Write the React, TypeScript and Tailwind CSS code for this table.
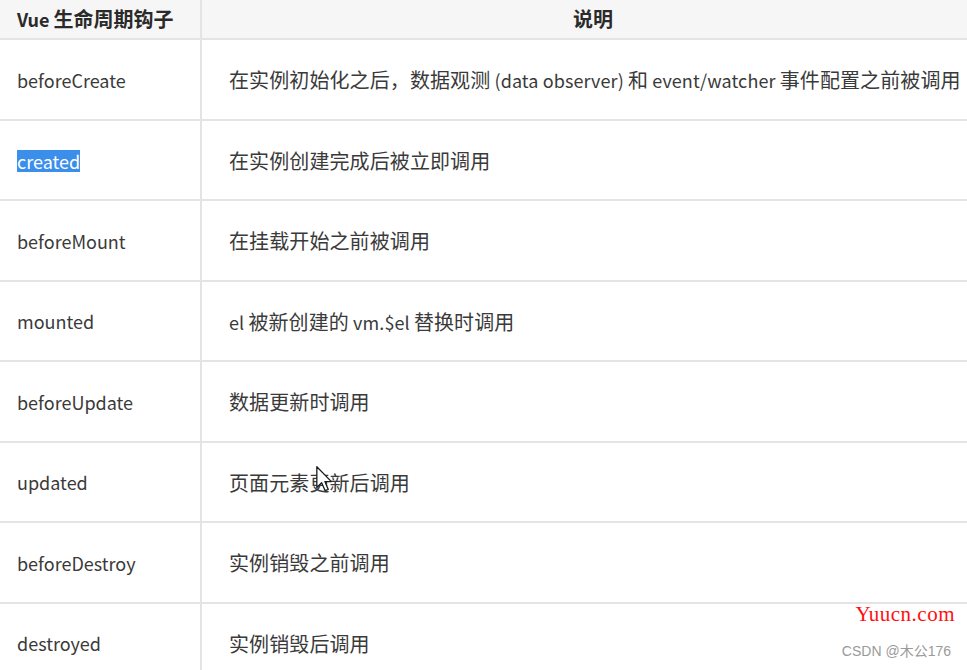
import React from 'react';

interface Hook {
  name: string;
  desc: string;
}

const HOOKS: Hook[] = [
  { name: 'beforeCreate', desc: '在实例初始化之后，数据观测 (data observer) 和 event/watcher 事件配置之前被调用' },
  { name: 'created', desc: '在实例创建完成后被立即调用' },
  { name: 'beforeMount', desc: '在挂载开始之前被调用' },
  { name: 'mounted', desc: 'el 被新创建的 vm.$el 替换时调用' },
  { name: 'beforeUpdate', desc: '数据更新时调用' },
  { name: 'updated', desc: '页面元素更新后调用' },
  { name: 'beforeDestroy', desc: '实例销毁之前调用' },
  { name: 'destroyed', desc: '实例销毁后调用' },
];

const CJK = /([\u3000-\u303f\u4e00-\u9fff\uff00-\uffef]+)/;

// chinese glyphs render a bit larger than the latin ones in the source
const Mixed: React.FC<{ text: string }> = ({ text }) => (
  <>
    {text.split(CJK).map((part, i) =>
      i % 2 === 1 ? <span key={i} className="text-[20px]">{part}</span> : <React.Fragment key={i}>{part}</React.Fragment>
    )}
  </>
);

const Cursor: React.FC = () => (
  <svg className="absolute left-[316px] top-[466px]" width="17" height="26" viewBox="0 0 13 20">
    <path d="M0.6 0.6 L0.6 16.5 L4.3 12.9 L7 19 L9.4 18 L6.8 12 L11.8 12 Z" fill="#fff" stroke="#1a1a1a" strokeWidth="1" strokeLinejoin="round" />
  </svg>
);

const App: React.FC = () => {
  return (
    <div className="relative w-[967px] h-[670px] overflow-hidden bg-white text-[#3a3a3a] text-[18px] font-['Noto_Sans_CJK_SC','Noto_Sans',sans-serif]">
      <div className="w-[988px]">
        <div className="flex h-[40px] bg-[#f6f6f6] border-b-2 border-[#e4e4e4] font-bold text-[#2a2a2a]">
          <div className="w-[202px] shrink-0 flex items-center pl-[17px] border-r-2 border-[#e4e4e4]">
            <span><Mixed text="Vue 生命周期钩子" /></span>
          </div>
          <div className="flex-1 flex items-center justify-center pr-[4px]">
            <span><Mixed text="说明" /></span>
          </div>
        </div>
        {HOOKS.map(h => (
          <div key={h.name} className="flex h-[80.5px] border-b-2 border-[#e4e4e4]">
            <div className="w-[202px] shrink-0 flex items-center pl-[17px] pt-[2px] border-r-2 border-[#e4e4e4]">
              {h.name === 'created' ? (
                <span className="bg-[#3b8eea] text-white leading-[22px]">{h.name}</span>
              ) : (
                h.name
              )}
            </div>
            <div className="flex-1 flex items-center pl-[27px] pt-[2px] whitespace-nowrap tracking-[0.1px]">
              <span><Mixed text={h.desc} /></span>
            </div>
          </div>
        ))}
      </div>

      <Cursor />

      <div className="absolute right-[12px] top-[599px] text-[#ff1010] text-[21px] font-['Liberation_Serif',serif] tracking-[0.5px]">Yuucn.com</div>
      <div className="absolute right-[16px] top-[641px] text-[#9a9a9a] text-[14px] font-['Liberation_Sans','Noto_Sans_CJK_SC',sans-serif]">CSDN @木公176</div>
    </div>
  );
};

export default App;
